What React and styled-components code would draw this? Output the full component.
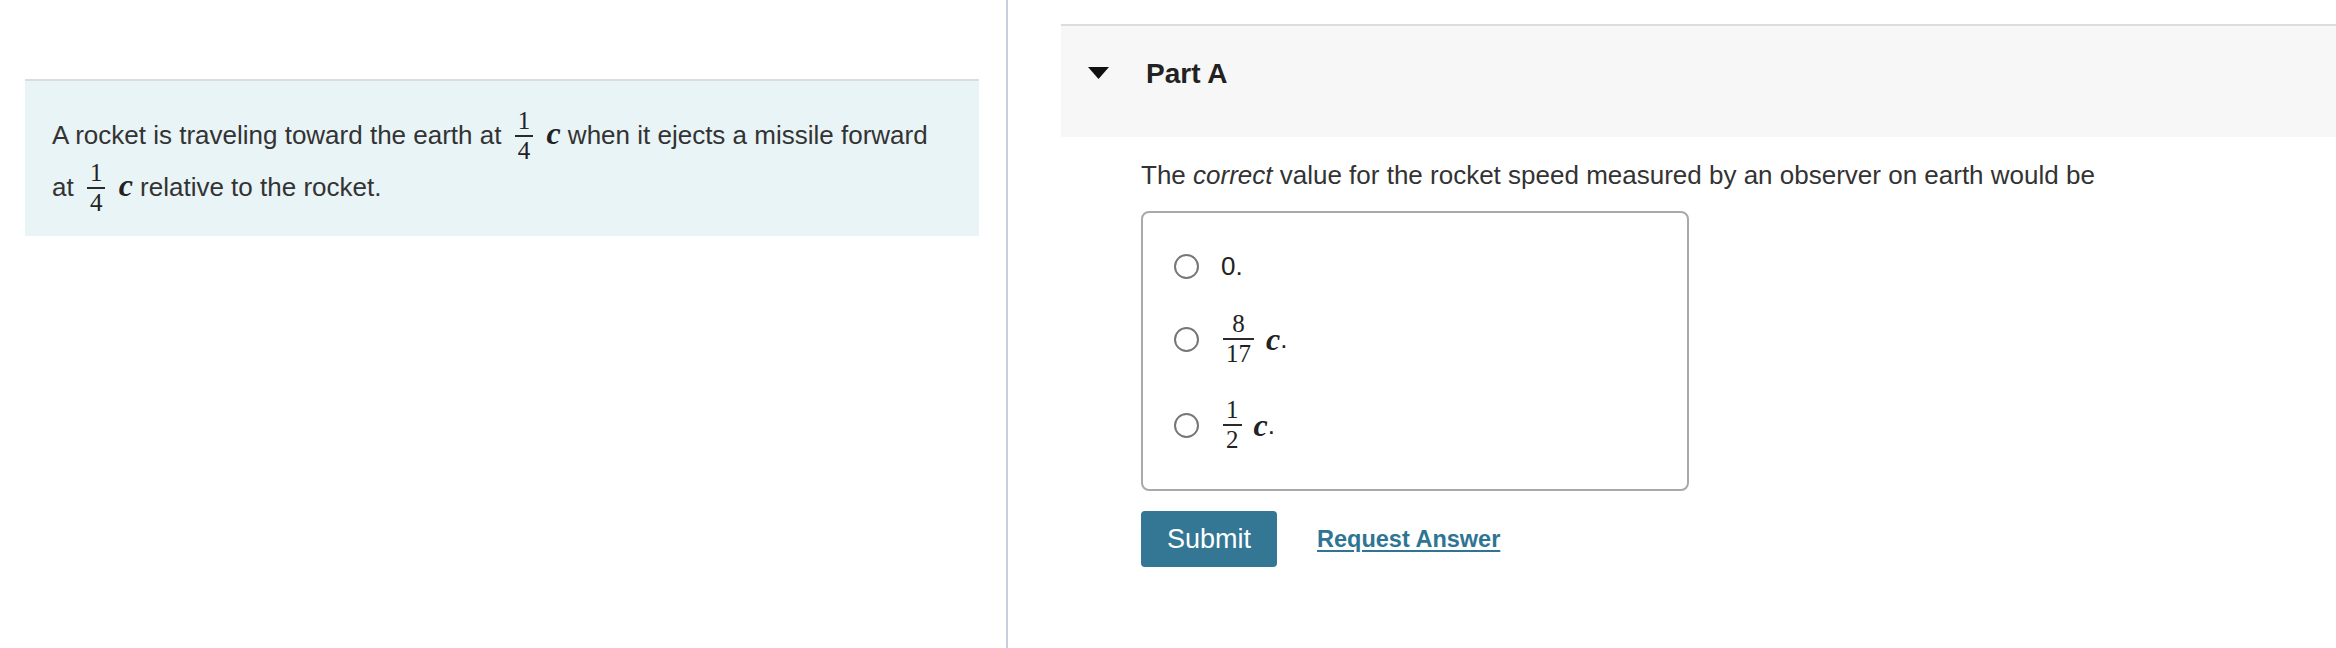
import React from "react";
import styled, { createGlobalStyle } from "styled-components";

const Global = createGlobalStyle`
  html, body { margin: 0; padding: 0; background: #ffffff; }
  body { font-family: "Liberation Sans", Arial, sans-serif; color: #333333; }
`;

const Page = styled.div`
  display: flex;
  min-height: 100vh;
  width: 100%;
`;

const LeftCol = styled.div`
  flex: none;
  width: 1008px;
  box-sizing: border-box;
  padding: 79px 27px 0 25px;
  border-right: 2px solid #c6d0dd;
`;

const Intro = styled.div`
  background: #e9f4f7;
  border-top: 2px solid #dcdcdc;
  padding: 28px 40px 23px 27px;
  font-size: 26px;
  line-height: 52px;
  color: #333333;
`;

const RightCol = styled.div`
  flex: 1;
  min-width: 0;
  box-sizing: border-box;
  padding: 24px 0 0 53px;
`;

const PartHeader = styled.div`
  display: flex;
  align-items: center;
  gap: 37px;
  height: 113px;
  box-sizing: border-box;
  padding: 0 0 16px 27px;
  background: #f7f7f7;
  border-top: 2px solid #dddddd;
`;

const PartTitle = styled.h2`
  margin: 0;
  font-size: 28px;
  line-height: 34px;
  font-weight: 700;
  color: #222222;
`;

const Caret = styled.svg`
  display: block;
  width: 21px;
  height: 12px;
  margin-bottom: 2px;
`;

const PartBody = styled.div`
  padding: 23px 0 0 80px;
`;

const Question = styled.p`
  margin: 0;
  font-size: 26px;
  line-height: 30px;
  color: #333333;
`;

const Choices = styled.div`
  margin-top: 21px;
  width: 548px;
  box-sizing: border-box;
  border: 2px solid #a9a9a9;
  border-radius: 8px;
  padding: 39px 0 37px 31px;
  display: flex;
  flex-direction: column;
  gap: 32px;
`;

const Choice = styled.label`
  display: flex;
  align-items: center;
  gap: 22px;
  cursor: pointer;
`;

const Radio = styled.span`
  flex: none;
  width: 25px;
  height: 25px;
  box-sizing: border-box;
  border: 2px solid #767676;
  border-radius: 50%;
  background: #ffffff;
`;

const ChoiceText = styled.span`
  display: inline-flex;
  align-items: center;
  min-height: 28px;
  font-size: 26px;
  line-height: 28px;
  color: #222222;
`;

const Frac = styled.span`
  display: inline-flex;
  flex-direction: column;
  align-items: stretch;
  vertical-align: 15px;
  margin: 0 ${(p) => p.$gap || 6}px 0 ${(p) => p.$lead || 6}px;
  font-family: "Liberation Serif", "Times New Roman", serif;
  font-size: 25px;
  line-height: 24px;
  color: #222222;
  text-align: center;
`;

const InlineFrac = styled(Frac)`
  margin-top: -3px;
  margin-bottom: -3px;
`;

const FracPart = styled.span`
  display: block;
  padding: 0 3px;
`;

const FracBar = styled.span`
  display: block;
  height: 2px;
  margin: 2px 0;
  background: #2a2a2a;
`;

const MathC = styled.span`
  font-family: "Liberation Serif", "Times New Roman", serif;
  font-style: italic;
  font-weight: 600;
  font-size: 32px;
  line-height: 28px;
  color: #222222;
`;

const Dot = styled.span`
  font-size: 26px;
`;

const Actions = styled.div`
  display: flex;
  align-items: center;
  gap: 40px;
  margin-top: 20px;
`;

const SubmitButton = styled.button`
  height: 56px;
  padding: 0 26px;
  border: none;
  border-radius: 4px;
  background: #337795;
  color: #ffffff;
  font-family: "Liberation Sans", Arial, sans-serif;
  font-size: 27px;
  cursor: pointer;
`;

const RequestLink = styled.a`
  font-size: 23.5px;
  font-weight: 700;
  color: #2e7594;
  text-decoration: underline;
  text-underline-offset: 3px;
  cursor: pointer;
`;

function Fraction({ num, den, lead, gap, inline }) {
  const Box = inline ? InlineFrac : Frac;
  return (
    <Box $lead={lead} $gap={gap}>
      <FracPart>{num}</FracPart>
      <FracBar />
      <FracPart>{den}</FracPart>
    </Box>
  );
}

export default function App() {
  return (
    <>
      <Global />
      <Page>
        <LeftCol>
          <Intro>
            A rocket is traveling toward the earth at <Fraction inline num="1" den="4" />{" "}
            <MathC>c</MathC> when it ejects a missile forward at{" "}
            <Fraction inline num="1" den="4" /> <MathC>c</MathC> relative to the rocket.
          </Intro>
        </LeftCol>
        <RightCol>
          <PartHeader>
            <Caret viewBox="0 0 21 12">
              <polygon points="0,0 21,0 10.5,12" fill="#111111" />
            </Caret>
            <PartTitle>Part A</PartTitle>
          </PartHeader>
          <PartBody>
            <Question>
              The <em>correct</em> value for the rocket speed measured by an observer on earth would be
            </Question>
            <Choices>
              <Choice>
                <Radio />
                <ChoiceText>0.</ChoiceText>
              </Choice>
              <Choice>
                <Radio />
                <ChoiceText>
                  <Fraction num="8" den="17" lead={2} gap={12} />
                  <MathC>c</MathC>
                  <Dot>.</Dot>
                </ChoiceText>
              </Choice>
              <Choice>
                <Radio />
                <ChoiceText>
                  <Fraction num="1" den="2" lead={2} gap={12} />
                  <MathC>c</MathC>
                  <Dot>.</Dot>
                </ChoiceText>
              </Choice>
            </Choices>
            <Actions>
              <SubmitButton>Submit</SubmitButton>
              <RequestLink>Request Answer</RequestLink>
            </Actions>
          </PartBody>
        </RightCol>
      </Page>
    </>
  );
}
